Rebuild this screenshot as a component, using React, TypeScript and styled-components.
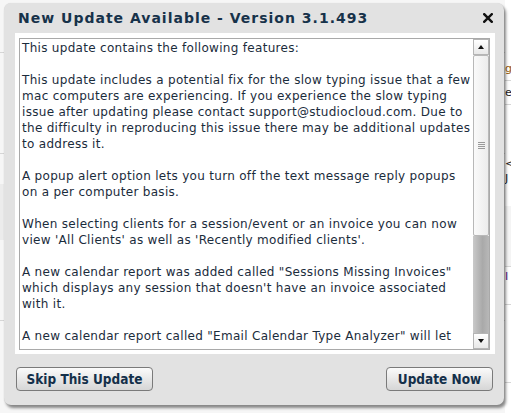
import styled, { createGlobalStyle } from 'styled-components';

const GlobalStyle = createGlobalStyle`
  html, body {
    margin: 0;
    padding: 0;
    width: 511px;
    height: 413px;
    overflow: hidden;
    background: #ffffff;
  }
`;

const Page = styled.div`
  position: relative;
  width: 511px;
  height: 413px;
  display: grid;
  grid-template-columns: 505px 1fr;
  font-family: 'DejaVu Sans', Verdana, sans-serif;
  font-size: 11px;
  color: #1a1a1a;
`;

const PageLeft = styled.div`
  display: flex;
  flex-direction: column;
  background: #f6f6f6;
`;

const PageRight = styled.div`
  display: flex;
  flex-direction: column;
  background: #fff;
  overflow: hidden;
`;

const BgRow = styled.div<{ $h: number; $line?: boolean; $shade?: string }>`
  height: ${(p) => p.$h}px;
  flex-shrink: 0;
  border-bottom: ${(p) => (p.$line ? '1px solid #d6d6d6' : 'none')};
  background: ${(p) => p.$shade || 'transparent'};
  display: flex;
  align-items: flex-end;
  white-space: nowrap;
  line-height: 14px;
`;

const BgLink = styled.span<{ $c: string }>`
  color: ${(p) => p.$c};
  text-decoration: underline;
`;

const Dialog = styled.div`
  position: absolute;
  left: 4px;
  top: 3px;
  width: 500px;
  height: 402px;
  box-sizing: border-box;
  background: #e2e2e2;
  border-radius: 7px;
  box-shadow: 2px 3px 3px rgba(0, 0, 0, 0.45), 0 0 1px rgba(0, 0, 0, 0.15);
  display: flex;
  flex-direction: column;
  font-family: 'DejaVu Sans', Verdana, sans-serif;
`;

const TitleBar = styled.div`
  height: 30px;
  display: flex;
  align-items: center;
  justify-content: space-between;
  padding: 0 11px 1px 14px;
  box-sizing: border-box;
`;

const Title = styled.div`
  font-weight: bold;
  font-size: 14px;
  letter-spacing: 1px;
  color: #17324a;
`;

const CloseBtn = styled.div`
  width: 10px;
  height: 10px;
  display: flex;
`;

const Frame = styled.div`
  margin: 0 9px 0 11px;
  height: 321px;
  background: #ffffff;
  padding: 5px 5px 4px 4px;
  box-sizing: border-box;
  display: flex;
`;

const TextBox = styled.div`
  flex: 1;
  border: 1px solid #a9a9a9;
  display: flex;
  overflow: hidden;
`;

const TextBody = styled.div`
  flex: 1;
  padding: 1px 0 0 2px;
  font-size: 12px;
  letter-spacing: 0.3px;
  line-height: 16px;
  color: #1b2c3c;
  white-space: pre;
  overflow: hidden;
`;

const ScrollBar = styled.div`
  width: 16px;
  display: flex;
  flex-direction: column;
  background: #f0f0f0;
`;

const ArrowBtn = styled.div<{ $down?: boolean }>`
  height: 16px;
  box-sizing: border-box;
  border: 1px solid #b5b5b5;
  background: linear-gradient(#ffffff, #e8e8e8);
  display: flex;
  align-items: center;
  justify-content: center;
  &::after {
    content: '';
    border-left: 3px solid transparent;
    border-right: 3px solid transparent;
    ${(p) => (p.$down ? 'border-top: 4px solid #111;' : 'border-bottom: 4px solid #111;')}
  }
`;

const Thumb = styled.div`
  height: 181px;
  box-sizing: border-box;
  border: 1px solid #b8b8b8;
  border-radius: 2px;
  background: linear-gradient(90deg, #fafafa, #ececec);
  display: flex;
  align-items: center;
  justify-content: center;
`;

const Grip = styled.div`
  width: 7px;
  height: 7px;
  background: repeating-linear-gradient(#9a9a9a 0 1px, transparent 1px 2px);
`;

const Track = styled.div`
  flex: 1;
  background: linear-gradient(90deg, #c9c9c9, #a9a9a9 60%, #b8b8b8);
`;

const Footer = styled.div`
  flex: 1;
  display: flex;
  justify-content: space-between;
  align-items: flex-start;
  padding: 13px 11px 0 12px;
`;

const Button = styled.button<{ $w: number }>`
  width: ${(p) => p.$w}px;
  height: 24px;
  border: 1px solid #7a7a7a;
  border-radius: 4px;
  background: linear-gradient(#fbfbfb, #e6e6e6 55%, #d6d6d6);
  font-family: 'DejaVu Sans Condensed', 'DejaVu Sans', Verdana, sans-serif;
  font-weight: bold;
  font-size: 13.5px;
  color: #14304a;
  padding: 0;
  cursor: pointer;
`;

const lines = [
  'This update contains the following features:',
  '',
  'This update includes a potential fix for the slow typing issue that a few',
  'mac computers are experiencing. If you experience the slow typing',
  'issue after updating please contact support@studiocloud.com. Due to',
  'the difficulty in reproducing this issue there may be additional updates',
  'to address it.',
  '',
  'A popup alert option lets you turn off the text message reply popups',
  'on a per computer basis.',
  '',
  'When selecting clients for a session/event or an invoice you can now',
  "view 'All Clients' as well as 'Recently modified clients'.",
  '',
  'A new calendar report was added called "Sessions Missing Invoices"',
  "which displays any session that doesn't have an invoice associated",
  'with it.',
  '',
  'A new calendar report called "Email Calendar Type Analyzer" will let',
];

export default function App() {
  return (
    <>
      <GlobalStyle />
      <Page>
        <PageLeft>
          <BgRow $h={52} $line />
          <BgRow $h={100} $line />
          <BgRow $h={30} />
          <BgRow $h={56} $shade="#ececec" />
          <BgRow $h={80} $line />
          <BgRow $h={95} $line />
        </PageLeft>
        <PageRight>
          <BgRow $h={76}>
            <BgLink $c="#9a5b0c">g</BgLink>
          </BgRow>
          <BgRow $h={4} $line />
          <BgRow $h={19}>e</BgRow>
          <BgRow $h={4} $line $shade="#fff" />
          <BgRow $h={66}>&lt;</BgRow>
          <BgRow $h={15}>J</BgRow>
          <BgRow $h={20} />
          <BgRow $h={60} $shade="#f4f4f4" $line />
          <BgRow $h={17} $shade="#fff">
            <span style={{ color: '#5a1a8a' }}>I</span>
          </BgRow>
          <BgRow $h={20} $line />
          <BgRow $h={77} $line />
        </PageRight>
        <Dialog>
          <TitleBar>
            <Title>New Update Available - Version 3.1.493</Title>
            <CloseBtn>
              <svg width="10" height="10" viewBox="0 0 10 10">
                <path d="M1.2 1.2 L8.8 8.8 M8.8 1.2 L1.2 8.8" stroke="#111" strokeWidth="2.4" strokeLinecap="square" />
              </svg>
            </CloseBtn>
          </TitleBar>
          <Frame>
            <TextBox>
              <TextBody>{lines.join('\n')}</TextBody>
              <ScrollBar>
                <ArrowBtn />
                <Thumb>
                  <Grip />
                </Thumb>
                <Track />
                <ArrowBtn $down />
              </ScrollBar>
            </TextBox>
          </Frame>
          <Footer>
            <Button $w={137}>Skip This Update</Button>
            <Button $w={107}>Update Now</Button>
          </Footer>
        </Dialog>
      </Page>
    </>
  );
}
